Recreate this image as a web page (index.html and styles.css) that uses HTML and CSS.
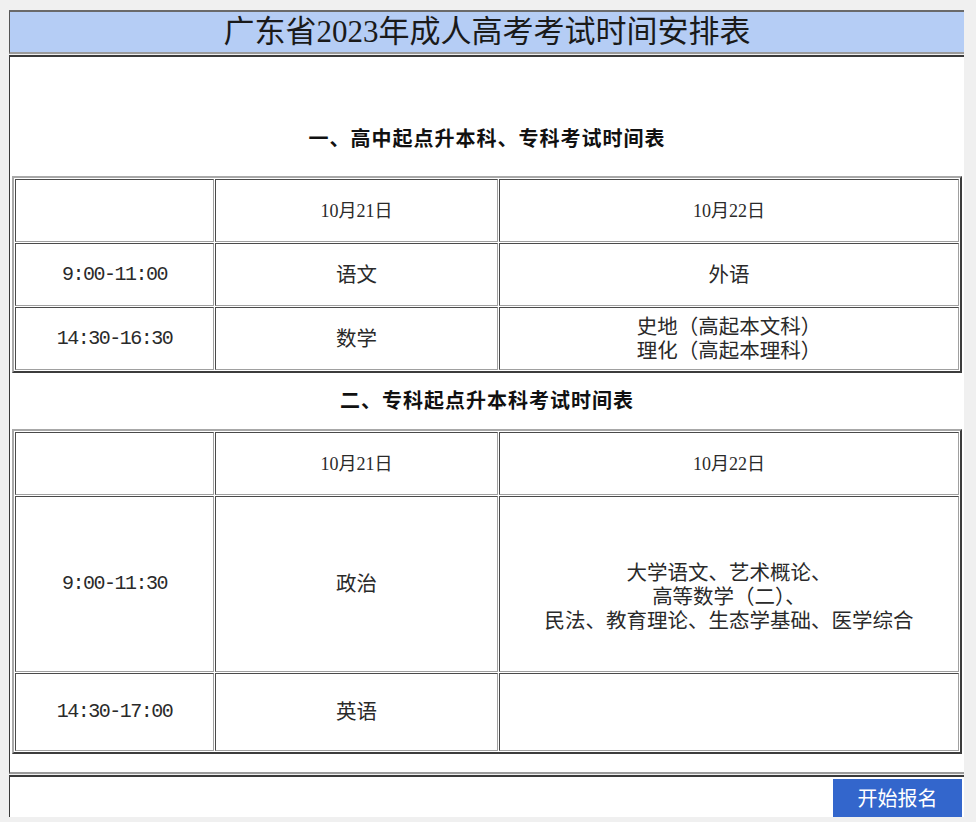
FILE: index.html
```html
<!DOCTYPE html>
<html lang="zh-CN">
<head>
<meta charset="utf-8">
<title>广东省2023年成人高考考试时间安排表</title>
<link rel="stylesheet" href="styles.css">
</head>
<body>
<div class="page">
  <div class="header">广东省2023年成人高考考试时间安排表</div>
  <div class="content">
    <div class="sec-title first">一、高中起点升本科、专科考试时间表</div>
    <table class="sched">
      <colgroup><col class="c1"><col class="c2"><col class="c3"></colgroup>
      <tr class="r"><td></td><td class="date">10月21日</td><td class="date">10月22日</td></tr>
      <tr class="r"><td class="time">9:00-11:00</td><td>语文</td><td>外语</td></tr>
      <tr class="r"><td class="time">14:30-16:30</td><td>数学</td><td>史地（高起本文科）<br>理化（高起本理科）</td></tr>
    </table>
    <div class="sec-title">二、专科起点升本科考试时间表</div>
    <table class="sched">
      <colgroup><col class="c1"><col class="c2"><col class="c3"></colgroup>
      <tr class="r"><td></td><td class="date">10月21日</td><td class="date">10月22日</td></tr>
      <tr class="tall"><td class="time">9:00-11:30</td><td>政治</td><td class="multi">大学语文、艺术概论、<br>高等数学（二）、<br>民法、教育理论、生态学基础、医学综合</td></tr>
      <tr class="r3"><td class="time">14:30-17:00</td><td>英语</td><td></td></tr>
    </table>
  </div>
  <div class="footer">
    <a class="btn" href="#">开始报名</a>
  </div>
</div>
</body>
</html>
```
FILE: styles.css
```css
html, body {
  margin: 0;
  padding: 0;
  height: 822px;
  overflow: hidden;
  background: #f0f0f0;
}
body {
  font-family: "Liberation Serif", "Noto Sans CJK SC", serif;
  color: #222;
}
.page {
  margin-left: 9px;
  width: 955px;
  padding-top: 10px;
}
.header {
  height: 40px;
  line-height: 40px;
  background: #b5cdf5;
  border-top: 2px solid #6a6a6a;
  border-left: 1px solid #555;
  border-bottom: 2px solid #9a9a9a;
  text-align: center;
  font-size: 31px;
  color: #1a1a1a;
  white-space: nowrap;
}
.content {
  margin-top: 1px;
  background: #fff;
  border-top: 2px solid #3a3a3a;
  border-left: 1px solid #3a3a3a;
  border-bottom: 2px solid #9a9a9a;
  padding: 0 2px 18px 2px;
}
.sec-title {
  height: 56px;
  line-height: 56px;
  text-align: center;
  font-size: 20px;
  font-weight: bold;
  letter-spacing: 1px;
  color: #111;
}
.sec-title.first {
  height: 40px;
  line-height: 40px;
  padding-top: 62px;
  padding-bottom: 17px;
}
.sched {
  width: 950px;
  table-layout: fixed;
  border-collapse: separate;
  border-spacing: 1px;
  border-style: solid;
  border-width: 2px;
  border-color: #a8a8a8 #3c3c3c #3c3c3c #a8a8a8;
  background: #fff;
}
.c1 { width: 199px; }
.c2 { width: 283px; }
.sched td {
  box-sizing: border-box;
  border-style: solid;
  border-width: 1px;
  border-color: #4a4a4a #a0a0a0 #a0a0a0 #4a4a4a;
  text-align: center;
  vertical-align: middle;
  font-size: 20.5px;
  line-height: 24px;
  padding: 0;
  color: #2a2a2a;
}
.sched td.date {
  font-size: 18px;
}
.sched td.time {
  font-family: "Liberation Mono", "Noto Sans CJK SC", monospace;
  font-size: 20px;
  letter-spacing: -1.5px;
}
.r td { height: 63px; }
.tall td { height: 176px; }
.tall td.multi { padding-top: 26px; }
.r3 td { height: 78px; }
.footer {
  margin-top: 1px;
  height: 38px;
  background: #fff;
  border-top: 2px solid #3a3a3a;
  border-left: 1px solid #3a3a3a;
  padding: 2px 2px 0 0;
  display: flex;
  justify-content: flex-end;
}
.btn {
  display: block;
  width: 129px;
  height: 38px;
  line-height: 38px;
  background: #3366cc;
  color: #fff;
  font-family: "Noto Sans CJK SC", sans-serif;
  font-size: 20px;
  text-align: center;
  text-decoration: none;
}
```
